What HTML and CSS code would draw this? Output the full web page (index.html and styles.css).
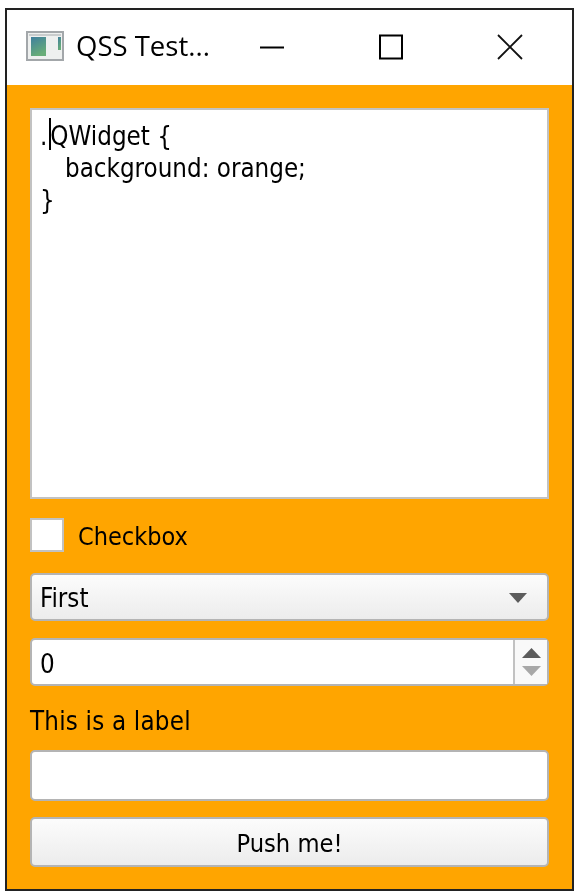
FILE: index.html
```html
<!DOCTYPE html>
<html lang="en">
<head>
    <meta charset="UTF-8">
    <title>QSS Test</title>
    <link rel="stylesheet" href="styles.css">
</head>
<body>
    <div class="window">
        <div class="titlebar">
            <svg class="app-icon" width="38" height="30" viewBox="0 0 38 30">
                <rect x="1" y="1" width="36" height="28" fill="#eef0ef" stroke="#a3a7aa" stroke-width="2"/>
                <rect x="3" y="3" width="32" height="2" fill="#c9cccd"/>
                <defs>
                    <linearGradient id="pane" x1="0" y1="0" x2="0.4" y2="1">
                        <stop offset="0" stop-color="#3f7f9e"/>
                        <stop offset="1" stop-color="#68ad78"/>
                    </linearGradient>
                </defs>
                <rect x="5" y="6" width="15" height="19" fill="url(#pane)"/>
                <rect x="32" y="6" width="3" height="13" fill="url(#pane)"/>
            </svg>
            <span class="title">QSS Test...</span>
            <div class="caption-btns">
                <svg class="caption-btn" width="26" height="26" viewBox="0 0 26 26"><path d="M1 13.5H25" stroke="#000" stroke-width="2" fill="none"/></svg>
                <svg class="caption-btn" width="26" height="26" viewBox="0 0 26 26"><rect x="2" y="1.5" width="22" height="23" stroke="#000" stroke-width="2" fill="none"/></svg>
                <svg class="caption-btn" width="26" height="26" viewBox="0 0 26 26"><path d="M1 1L25 25M25 1L1 25" stroke="#111" stroke-width="1.8" fill="none"/></svg>
            </div>
        </div>
        <div class="central">
            <div class="editor">
                <span class="caret"></span>
                <div><span class="dot">.</span>QWidget {</div>
                <div class="indent">background: orange;</div>
                <div>}</div>
            </div>
            <div class="checkbox-row">
                <span class="checkbox"></span>
                <span class="checkbox-text">Checkbox</span>
            </div>
            <div class="combo">
                <span>First</span>
                <svg width="18" height="10" viewBox="0 0 18 10"><path d="M0 0H18L9 10Z" fill="#5c5c5c"/></svg>
            </div>
            <div class="spinbox">
                <span class="spin-value">0</span>
                <div class="spin-arrows">
                    <svg width="19" height="10" viewBox="0 0 19 10"><path d="M0 10H19L9.5 0Z" fill="#5c5c5c"/></svg>
                    <svg width="19" height="10" viewBox="0 0 19 10"><path d="M0 0H19L9.5 10Z" fill="#a8a8a8"/></svg>
                </div>
            </div>
            <div class="label">This is a label</div>
            <div class="lineedit"></div>
            <button class="push">Push me!</button>
        </div>
    </div>
</body>
</html>
```

FILE: styles.css
```css
body {
    margin: 0;
    background-color: #fff;
    color: #000;
    font-family: "DejaVu Sans Condensed", "DejaVu Sans", sans-serif;
    font-size: 25.7px;
}
.window {
    width: 569px;
    height: 883px;
    margin: 8px 0 0 5px;
    box-sizing: border-box;
    border: 2px solid #222;
    display: flex;
    flex-direction: column;
    filter: blur(0.5px);
}
.titlebar {
    height: 75px;
    flex: none;
    display: flex;
    align-items: center;
    background-color: #fff;
}
.app-icon {
    margin-left: 19px;
    margin-bottom: 4px;
}
.title {
    margin-left: 12px;
    font-family: "Open Sans", sans-serif;
    font-size: 27.5px;
    margin-bottom: 4px;
}
.caption-btns {
    display: flex;
    margin-left: 49px;
    margin-bottom: 2px;
    gap: 93px;
}
.central {
    flex: 1;
    background-color: #ffa500;
    padding: 23px 23px 22px;
    display: flex;
    flex-direction: column;
}
.editor {
    position: relative;
    height: 391px;
    flex: none;
    box-sizing: border-box;
    border: 2px solid #c2c2c2;
    background-color: #fff;
    padding: 10px 8px;
    line-height: 32px;
}
.dot {
    margin-right: 3px;
}
.indent {
    padding-left: 25px;
}
.caret {
    position: absolute;
    left: 17px;
    top: 8px;
    width: 2px;
    height: 32px;
    background-color: #000;
}
.checkbox-row {
    display: flex;
    align-items: center;
    gap: 14px;
    margin-top: 19px;
    height: 34px;
}
.checkbox {
    width: 34px;
    height: 34px;
    box-sizing: border-box;
    border: 2px solid #c2c2c2;
    background-color: #fff;
}
.checkbox-text {
    font-size: 25px;
    padding-top: 2px;
}
.combo, .spinbox, .lineedit, .push {
    box-sizing: border-box;
    border: 2px solid #b4b4b4;
    border-radius: 5px;
    flex: none;
}
.combo {
    height: 48px;
    margin-top: 21px;
    padding: 2px 20px 0 8px;
    display: flex;
    align-items: center;
    justify-content: space-between;
    background: linear-gradient(#fcfcfc, #ececec);
}
.spinbox {
    height: 48px;
    margin-top: 17px;
    display: flex;
    background-color: #fff;
}
.spin-value {
    flex: 1;
    padding-left: 8px;
    line-height: 48px;
}
.spin-arrows {
    width: 34px;
    box-sizing: border-box;
    border-left: 2px solid #c2c2c2;
    display: flex;
    flex-direction: column;
    align-items: center;
    justify-content: center;
    gap: 8px;
    background-color: #f9f9f9;
}
.label {
    margin-top: 17px;
    height: 47px;
    line-height: 36px;
    letter-spacing: 0.2px;
}
.lineedit {
    height: 51px;
    background-color: #fff;
}
.push {
    height: 50px;
    margin-top: 16px;
    padding: 2px 0 0;
    font: inherit;
    font-size: 25.2px;
    color: #000;
    background: linear-gradient(#fcfcfc, #ececec);
}
```
